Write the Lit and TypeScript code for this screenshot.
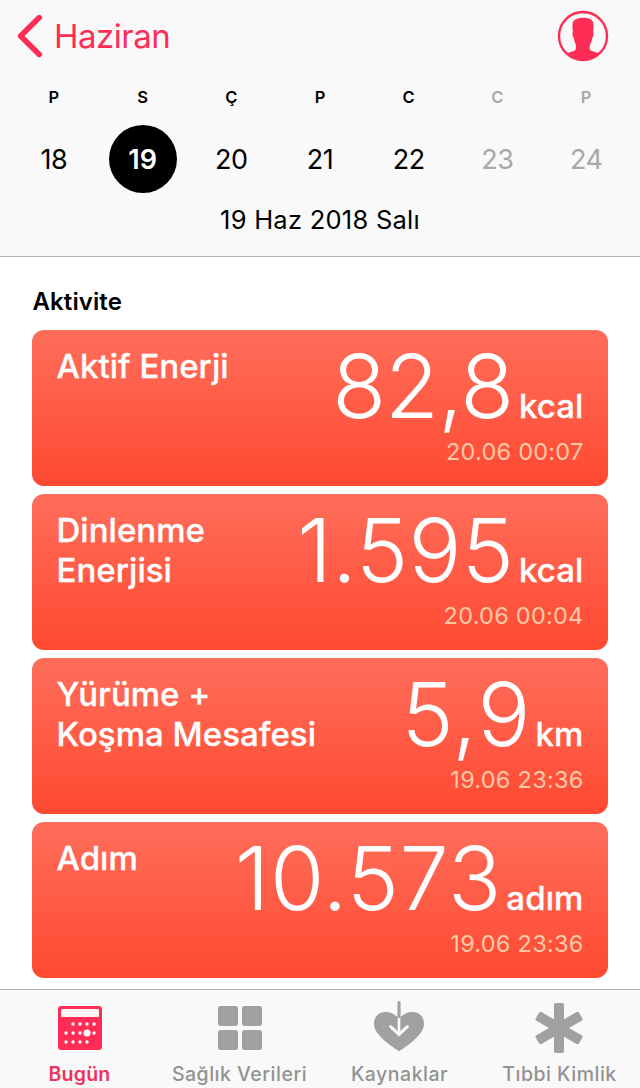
import { LitElement, html, css, svg } from "lit";
import { customElement, property } from "lit/decorators.js";
import { classMap } from "lit/directives/class-map.js";
import { styleMap } from "lit/directives/style-map.js";

interface Metric {
  title: string[];
  value: string;
  unit: string;
  time: string;
  tracking: number;
}

const DAYS = [
  { letter: "P", day: 18 },
  { letter: "S", day: 19, selected: true },
  { letter: "Ç", day: 20 },
  { letter: "P", day: 21 },
  { letter: "C", day: 22 },
  { letter: "C", day: 23, future: true },
  { letter: "P", day: 24, future: true },
];

const METRICS: Metric[] = [
  { title: ["Aktif Enerji"], value: "82,8", unit: "kcal", time: "20.06 00:07", tracking: -0.9 },
  { title: ["Dinlenme", "Enerjisi"], value: "1.595", unit: "kcal", time: "20.06 00:04", tracking: 0.3 },
  { title: ["Yürüme +", "Koşma Mesafesi"], value: "5,9", unit: "km", time: "19.06 23:36", tracking: 1 },
  { title: ["Adım"], value: "10.573", unit: "adım", time: "19.06 23:36", tracking: 0.6 },
];

const DOTS = [
  [73, 39], [80, 39], [87, 39], [94, 39],
  [66, 48], [73, 48], [80, 48], [94, 48],
  [66, 57], [73, 57], [80, 57], [87, 57],
];

const calendarIcon = html`<svg width="44" height="44" viewBox="58 21 44 44">
  <rect x="58" y="21" width="44" height="44" rx="3" fill="#ff2d55" />
  <rect x="61" y="24" width="38" height="8" fill="#f9f4f6" />
  ${DOTS.map(([x, y]) => svg`<circle cx=${x} cy=${y} r="1.7" fill="#fff" />`)}
  <circle cx="87" cy="48" r="3.5" fill="#fff" />
</svg>`;

const gridIcon = html`<svg width="44" height="44" viewBox="0 0 44 44" fill="#a1a1a1">
  <rect width="20" height="20" rx="2.5" />
  <rect x="24" width="20" height="20" rx="2.5" />
  <rect y="24" width="20" height="20" rx="2.5" />
  <rect x="24" y="24" width="20" height="20" rx="2.5" />
</svg>`;

const heartIcon = html`<svg width="52" height="54" viewBox="1 0 52 54">
  <path d="M26 50.2C23 48.2 15 43.4 9 37.3C4 32.2 1 27.8 1 22.8C1 15.2 6 11 12.5 11C17 11 21 12.6 24 15.7H28C31 12.6 35 11 39.5 11C46 11 51 15.2 51 22.8C51 27.8 48 32.2 43 37.3C37 43.4 29 48.2 26 50.2Z" fill="#a1a1a1" />
  <path d="M26 15.5V33" stroke="#f9f9f9" stroke-width="2.6" />
  <path d="M17.6 25.6L26 33.4L34.4 25.6" fill="none" stroke="#f9f9f9" stroke-width="3" stroke-linecap="round" />
  <path d="M26 1.6V15.6" stroke="#a1a1a1" stroke-width="3.2" stroke-linecap="round" />
</svg>`;

const asteriskIcon = html`<svg width="50" height="50" viewBox="-24 -25 50 50" fill="#a1a1a1">
  <rect x="-5" y="-25" width="10" height="50" rx="1.8" />
  <rect x="-5" y="-25" width="10" height="50" rx="1.8" transform="rotate(60)" />
  <rect x="-5" y="-25" width="10" height="50" rx="1.8" transform="rotate(-60)" />
</svg>`;

const TABS = [
  { label: "Bugün", icon: calendarIcon, active: true },
  { label: "Sağlık Verileri", icon: gridIcon },
  { label: "Kaynaklar", icon: heartIcon },
  { label: "Tıbbi Kimlik", icon: asteriskIcon },
];

@customElement("metric-card")
export class MetricCard extends LitElement {
  @property({ attribute: false }) metric!: Metric;

  static styles = css`
    :host {
      display: block;
    }
    .card {
      box-sizing: border-box;
      height: 156px;
      padding: 16px 24.5px 0;
      border-radius: 12px;
      background: linear-gradient(#ff6e5b, #ff4931);
      color: #fff;
      display: grid;
      grid-template-columns: 1fr auto;
      grid-template-rows: 90px 30px;
      white-space: nowrap;
    }
    .title {
      font-size: 33px;
      line-height: 40px;
      font-weight: 500;
      letter-spacing: 0.03px;
      -webkit-text-stroke: 0.3px #fff;
    }
    .reading {
      display: flex;
      align-items: baseline;
      height: 90px;
      line-height: 80px;
      gap: 5px;
    }
    .value {
      font-size: 88px;
      font-weight: 300;
      letter-spacing: var(--tracking);
      margin-right: calc(-1 * var(--tracking));
    }
    .unit {
      font-size: 33px;
      font-weight: 500;
      letter-spacing: 0.1px;
      -webkit-text-stroke: 0.3px #fff;
    }
    .time {
      grid-column: 1 / 3;
      text-align: right;
      font-size: 23.5px;
      line-height: 31px;
      letter-spacing: 0.25px;
      color: #ffc8a8;
    }
  `;

  render() {
    const { title, value, unit, time, tracking } = this.metric;
    return html`<article class="card">
      <div class="title">${title.map((line) => html`<div>${line}</div>`)}</div>
      <div class="reading" style=${styleMap({ "--tracking": `${tracking}px` })}>
        <span class="value">${value}</span><span class="unit">${unit}</span>
      </div>
      <div class="time">${time}</div>
    </article>`;
  }
}

@customElement("app-root")
export class AppRoot extends LitElement {
  static styles = css`
    :host {
      display: flex;
      flex-direction: column;
      box-sizing: border-box;
      width: 640px;
      height: 1088px;
      overflow: hidden;
      background: #fff;
      color: #000;
      font-family: Inter, "Liberation Sans", sans-serif;
    }
    svg {
      display: block;
    }
    .header {
      box-sizing: border-box;
      height: 257px;
      flex: none;
      background: #f9f9f9;
      border-bottom: 1px solid #b2b2b2;
    }
    .nav {
      display: flex;
      align-items: center;
      justify-content: space-between;
      height: 72px;
      padding: 0 31px 0 17px;
    }
    .back {
      display: flex;
      align-items: center;
      gap: 11px;
      color: #ff2d55;
      font-size: 33px;
      line-height: 40px;
      letter-spacing: -0.5px;
    }
    .week {
      display: grid;
      grid-template-columns: repeat(7, 1fr);
      padding: 0 9.5px;
      text-align: center;
    }
    .letter {
      font-size: 16.5px;
      font-weight: 600;
      line-height: 50px;
    }
    .day {
      box-sizing: border-box;
      width: 68px;
      height: 68px;
      margin: 3px auto 0;
      padding-top: 1px;
      border-radius: 50%;
      line-height: 68px;
      font-size: 27px;
      letter-spacing: -0.5px;
    }
    .selected .day {
      background: #000;
      color: #fff;
      font-weight: 600;
      letter-spacing: 0;
    }
    .future {
      color: #a8a8a8;
    }
    .date {
      text-align: center;
      font-size: 25.5px;
      line-height: 54px;
      letter-spacing: 0.25px;
    }
    .content {
      flex: 1;
      padding: 0 32px;
    }
    .section {
      margin: 0;
      padding: 27px 0 10px 0.5px;
      font-size: 24px;
      line-height: 36px;
      font-weight: 600;
      letter-spacing: 0.1px;
    }
    .cards {
      display: flex;
      flex-direction: column;
      gap: 8px;
    }
    .tabs {
      box-sizing: border-box;
      height: 99px;
      flex: none;
      display: grid;
      grid-template-columns: repeat(4, 1fr);
      background: #f9f9f9;
      border-top: 1px solid #b2b2b2;
    }
    .tab {
      display: flex;
      flex-direction: column;
      align-items: center;
      color: #929292;
      font-size: 19.5px;
      font-weight: 500;
      line-height: 24px;
      letter-spacing: 0.5px;
      white-space: nowrap;
    }
    .tab span {
      margin-right: 1px;
    }
    .icon {
      display: flex;
      align-items: center;
      justify-content: center;
      height: 72px;
      margin-top: 2px;
      margin-bottom: -2px;
    }
    .active {
      color: #f0325a;
      font-weight: 600;
      letter-spacing: 0.2px;
    }
  `;

  render() {
    return html`
      <header class="header">
        <nav class="nav">
          <div class="back">
            <svg width="26" height="44" viewBox="17 14 26 44" fill="none">
              <path d="M39.3 17.6L20.6 36L39.3 54.4" stroke="#ff2d55" stroke-width="5.6" stroke-linecap="round" stroke-linejoin="round" />
            </svg>
            <span>Haziran</span>
          </div>
          <svg width="52" height="52" viewBox="557 10 52 52">
            <circle cx="583" cy="36" r="24" fill="none" stroke="#ff2d55" stroke-width="2.4" />
            <path d="M567 53.4C571 51.8 575 51.4 575.6 49.6C576.1 47.8 576.1 46.2 575.8 44.8C574.8 42.8 574 40 573.7 37.6C572.5 36.8 572.2 33 572.9 31.4C572.3 28.5 572.3 24.5 572.9 22.2C574.6 18.8 579 17.8 583 17.8C587.6 17.8 591.8 19 593.1 22C593.7 25 593.6 28.5 593.2 31.4C593.8 33 593.5 36.8 592.4 37.6C592 40 591.2 42.8 590 44.8C589.6 46.2 589.5 47.8 589.9 49.6C590.6 51.4 595 51.8 599 53.4C594 58 589 60 583 60C577 60 572 58 567 53.4Z" fill="#ff2d55" />
          </svg>
        </nav>
        <div class="week">
          ${DAYS.map(
            (d) => html`<div class=${classMap({ selected: !!d.selected, future: !!d.future })}>
              <div class="letter">${d.letter}</div>
              <div class="day">${d.day}</div>
            </div>`
          )}
        </div>
        <div class="date">19 Haz 2018 Salı</div>
      </header>
      <main class="content">
        <h2 class="section">Aktivite</h2>
        <div class="cards">
          ${METRICS.map((m) => html`<metric-card .metric=${m}></metric-card>`)}
        </div>
      </main>
      <footer class="tabs">
        ${TABS.map(
          (t) => html`<div class=${classMap({ tab: true, active: !!t.active })}>
            <div class="icon">${t.icon}</div>
            <span>${t.label}</span>
          </div>`
        )}
      </footer>
    `;
  }
}
